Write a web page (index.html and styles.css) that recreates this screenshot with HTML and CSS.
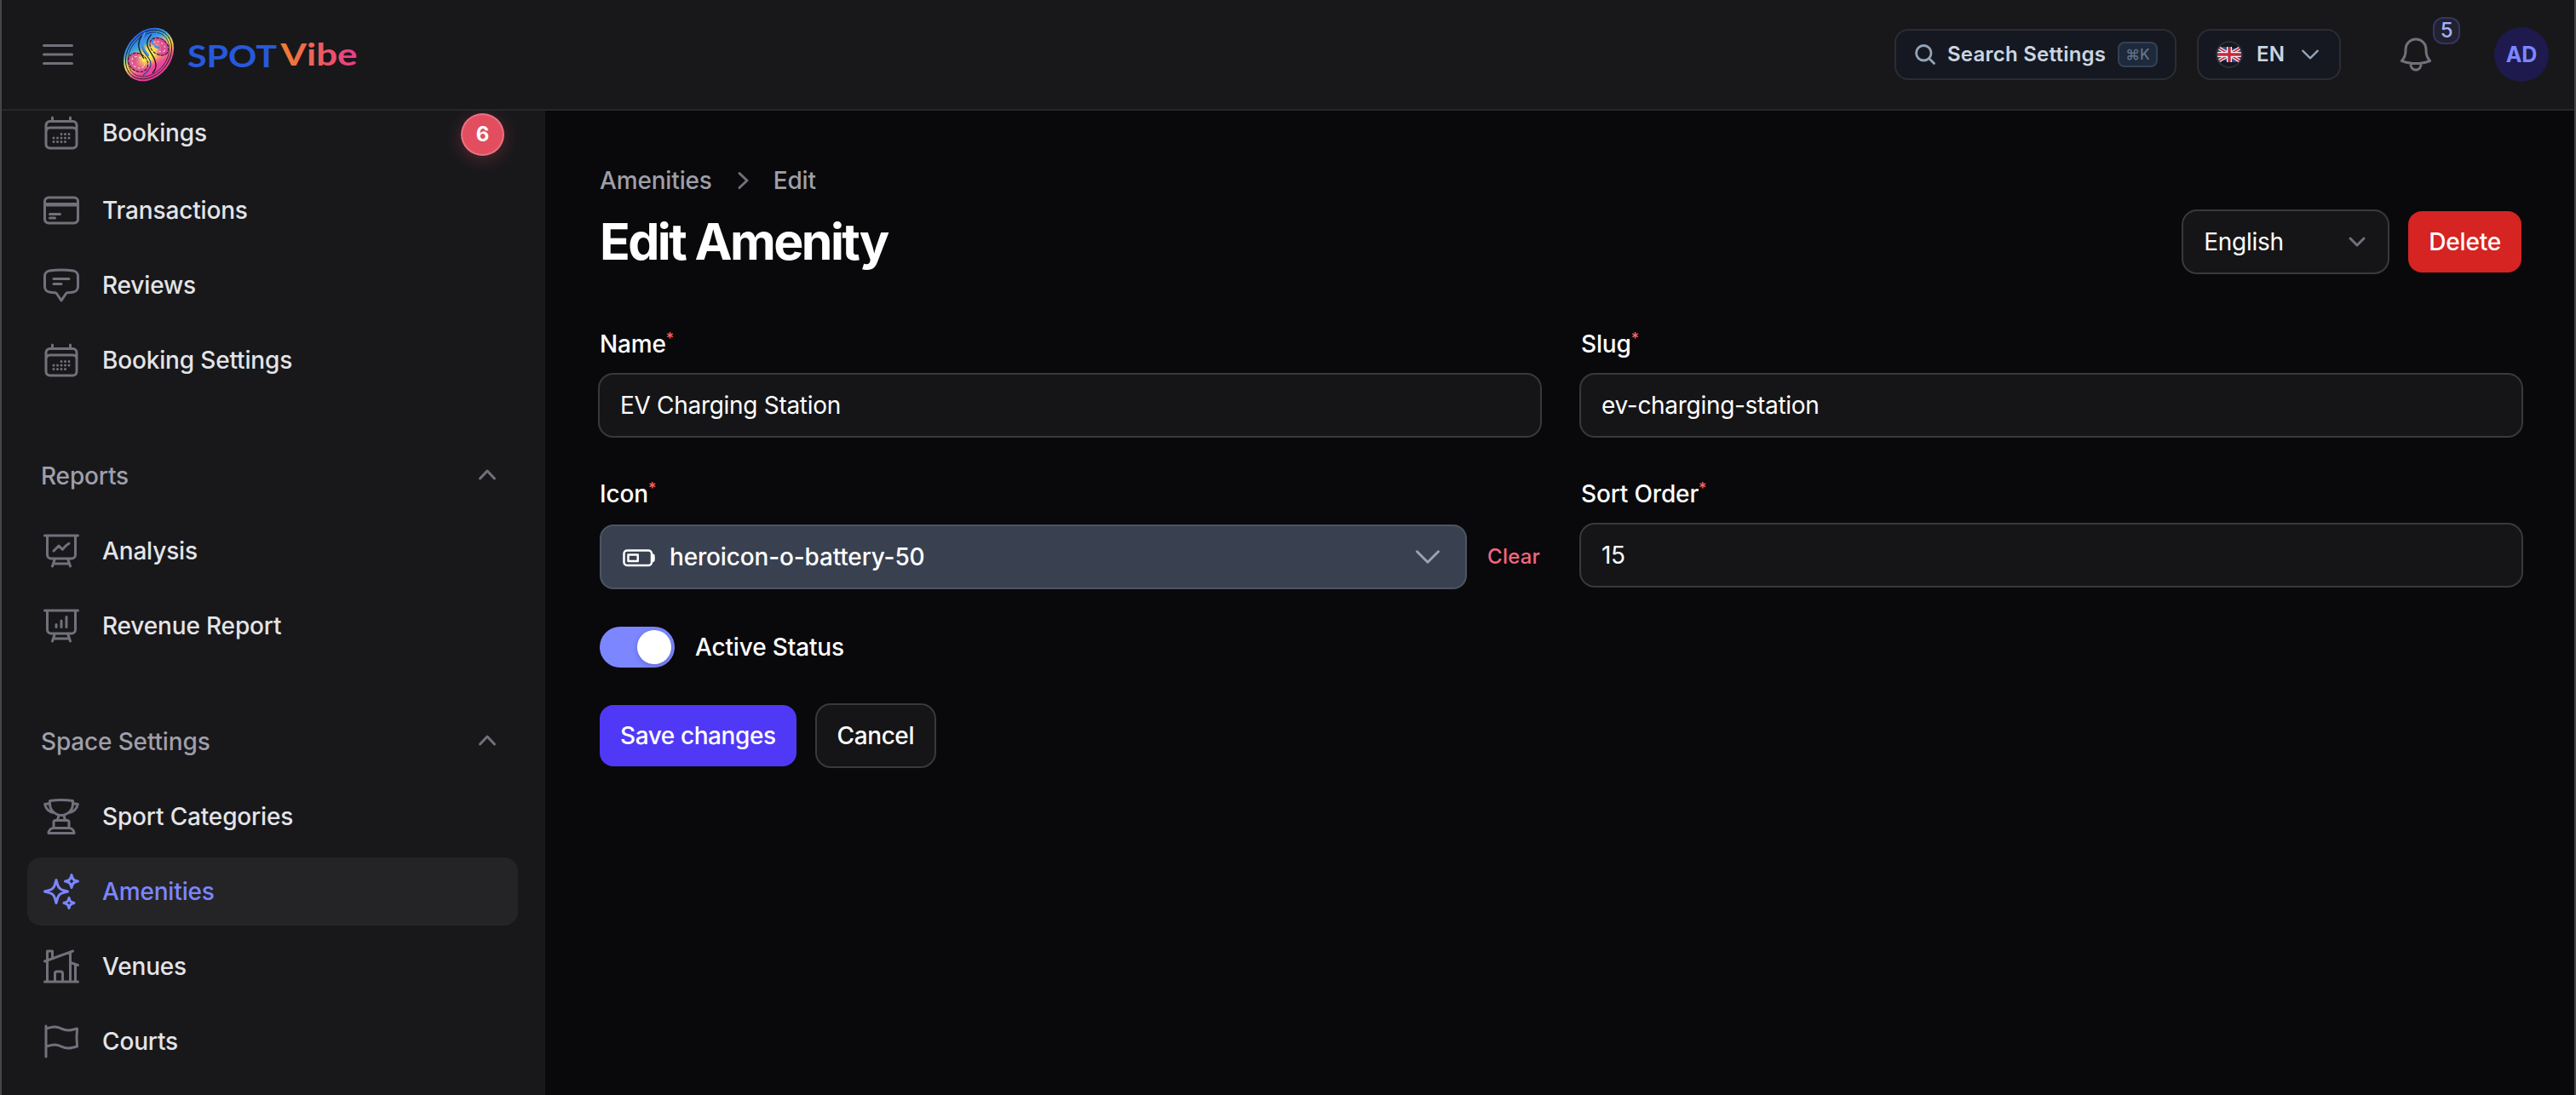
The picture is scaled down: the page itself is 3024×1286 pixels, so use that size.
FILE: index.html
```
<!DOCTYPE html>
<html lang="en" class="dark">
<head>
  <meta charset="UTF-8">
  <meta name="viewport" content="width=device-width, initial-scale=1.0">
  <title>Edit Amenity - SPOTVibe</title>
  <link rel="stylesheet" href="styles.css">
</head>
<body>
  <header class="topbar">
    <button class="menu-btn" aria-label="Toggle sidebar">
      <svg class="icon" viewBox="0 0 24 24"><path d="M3.75 6.75h16.5M3.75 12h16.5m-16.5 5.25h16.5"/></svg>
    </button>
    <a class="logo" href="#">
      <svg class="logo-img" viewBox="0 0 290 68">
        <defs>
          <linearGradient id="rim" gradientUnits="userSpaceOnUse" x1="-25" y1="-10" x2="25" y2="10">
            <stop offset="0" stop-color="#2563eb"/>
            <stop offset=".25" stop-color="#38a3e0"/>
            <stop offset=".5" stop-color="#fde047"/>
            <stop offset=".78" stop-color="#ec4899"/>
            <stop offset="1" stop-color="#ec3a9b"/>
          </linearGradient>
          <radialGradient id="core">
            <stop offset="0" stop-color="#fff04a"/>
            <stop offset=".45" stop-color="#f8e04f"/>
            <stop offset="1" stop-color="#f5a565" stop-opacity="0"/>
          </radialGradient>
          <linearGradient id="vibe" gradientUnits="userSpaceOnUse" x1="193" y1="0" x2="282" y2="0">
            <stop offset="0" stop-color="#f0802f"/>
            <stop offset="1" stop-color="#ec3a8b"/>
          </linearGradient>
        </defs>
        <g transform="translate(38.5 34) rotate(38)">
          <ellipse rx="26.5" ry="34" fill="url(#rim)"/>
          <ellipse rx="24" ry="31.5" fill="none" stroke="#18181b" stroke-width=".9"/>
          <ellipse rx="21.5" ry="28.5" fill="none" stroke="#18181b" stroke-width=".7"/>
          <ellipse cx="4" cy="-15" rx="13" ry="10" fill="#dd4b9c"/>
          <ellipse cx="-4" cy="15" rx="13" ry="11" fill="#dd5598"/>
          <ellipse rx="12" ry="21" fill="url(#core)"/>
          <path d="M-17-17C-18-3-8 1 1 3s12 8 9 20" fill="none" stroke="#2a3f9c" stroke-width="1.2"/>
          <path d="M-12-20C-13-7-4-5 4-2s14 8 13 16" fill="none" stroke="#18181b" stroke-width="1.3"/>
          <path d="M-20-12C-19 0-10 4-2 7" fill="none" stroke="#18181b" stroke-width="1.3"/>
          <path d="M-19-17C-16-2-8-1 0 1M-8-25C-10-14-2-10 5-14" fill="none" stroke="#3f8fe8" stroke-width="2.4"/>
          <ellipse cx="4" cy="-15" rx="12" ry="9" fill="none" stroke="#18181b" stroke-width="1" stroke-dasharray="3 2"/>
          <ellipse cx="-4" cy="15" rx="12.5" ry="10" fill="none" stroke="#18181b" stroke-width="1" stroke-dasharray="3 2"/>
          <ellipse cx="-4" cy="15" rx="8" ry="6" fill="none" stroke="#ffe9a8" stroke-width="1" stroke-dasharray="2 3"/>
          <ellipse cx="4" cy="-15" rx="8" ry="5" fill="none" stroke="#ffd0a8" stroke-width="1" stroke-dasharray="2 3"/>
        </g>
        <text x="84" y="49" class="logo-spot" textLength="105" lengthAdjust="spacingAndGlyphs">SPOT</text>
        <text x="193.500" y="47" class="logo-vibe" textLength="90" lengthAdjust="spacingAndGlyphs" fill="url(#vibe)">Vibe</text>
      </svg>
    </a>
    <div class="topbar-end">
      <button class="pill search-btn">
        <svg class="search-icon" viewBox="0 0 24 24"><path d="m21 21-5.197-5.197m0 0A7.5 7.5 0 1 0 5.196 5.196a7.5 7.5 0 0 0 10.607 10.607Z"/></svg>
        <span>Search Settings</span>
        <kbd>⌘K</kbd>
      </button>
      <button class="pill lang-btn">
        <span class="flag">
          <svg viewBox="0 0 28 20">
            <path d="M0 2q7-2 14 0t14 0v16q-7 2-14 0t-14 0z" fill="#3a4a8c"/>
            <path d="M1 2l26 16M27 2L1 18" stroke="#f3f3f5" stroke-width="4"/>
            <path d="M1 2l26 16M27 2L1 18" stroke="#c8283c" stroke-width="1.5"/>
            <path d="M14 1v18M0 10h28" stroke="#f3f3f5" stroke-width="6"/>
            <path d="M14 1v18M0 10h28" stroke="#c8283c" stroke-width="3.4"/>
          </svg>
        </span>
        <span>EN</span>
        <svg class="lang-chevron" viewBox="0 0 24 24"><path d="m19.5 8.25-7.5 7.5-7.5-7.5"/></svg>
      </button>
      <button class="bell-btn" aria-label="Notifications">
        <svg class="icon" viewBox="0 0 24 24"><path d="M14.857 17.082a23.848 23.848 0 0 0 5.454-1.31A8.967 8.967 0 0 1 18 9.75V9A6 6 0 0 0 6 9v.75a8.967 8.967 0 0 1-2.312 6.022c1.733.64 3.56 1.085 5.455 1.31m5.714 0a24.255 24.255 0 0 1-5.714 0m5.714 0a3 3 0 1 1-5.714 0"/></svg>
        <span class="bell-badge">5</span>
      </button>
      <div class="avatar">AD</div>
    </div>
  </header>

  <div class="layout">
    <aside class="sidebar">
      <ul class="nav-group">
        <li class="nav-item has-badge">
          <svg class="icon" viewBox="0 0 24 24"><path d="M6.75 3v2.25M17.25 3v2.25M3 18.75V7.5a2.25 2.25 0 0 1 2.25-2.25h13.5A2.25 2.25 0 0 1 21 7.5v11.25m-18 0A2.25 2.25 0 0 0 5.25 21h13.5A2.25 2.25 0 0 0 21 18.75m-18 0v-7.5A2.25 2.25 0 0 1 5.25 9h13.5A2.25 2.25 0 0 1 21 11.25v7.5m-9-6h.008v.008H12v-.008ZM12 15h.008v.008H12V15Zm0 2.25h.008v.008H12v-.008ZM9.75 15h.008v.008H9.75V15Zm0 2.25h.008v.008H9.75v-.008ZM7.5 15h.008v.008H7.5V15Zm0 2.25h.008v.008H7.5v-.008Zm6.75-4.5h.008v.008h-.008v-.008Zm0 2.25h.008v.008h-.008V15Zm0 2.25h.008v.008h-.008v-.008Zm2.25-4.5h.008v.008H16.5v-.008Zm0 2.25h.008v.008H16.5V15Z"/></svg>
          <span>Bookings</span>
          <span class="nav-badge">6</span>
        </li>
        <li class="nav-item">
          <svg class="icon" viewBox="0 0 24 24"><path d="M2.25 8.25h19.5M2.25 9h19.5m-16.5 5.25h6m-6 2.25h3m-3.75 3h15a2.25 2.25 0 0 0 2.25-2.25V6.75A2.25 2.25 0 0 0 19.5 4.5h-15a2.25 2.25 0 0 0-2.25 2.25v10.5A2.25 2.25 0 0 0 4.5 19.5Z"/></svg>
          <span>Transactions</span>
        </li>
        <li class="nav-item">
          <svg class="icon" viewBox="0 0 24 24"><path d="M7.5 8.25h9m-9 3H12m-9.75 1.51c0 1.6 1.123 2.994 2.707 3.227 1.129.166 2.27.293 3.423.379.35.026.67.21.865.501L12 21l2.755-4.133a1.14 1.14 0 0 1 .865-.501 48.172 48.172 0 0 0 3.423-.379c1.584-.233 2.707-1.626 2.707-3.228V6.741c0-1.602-1.123-2.995-2.707-3.228A48.394 48.394 0 0 0 12 3c-2.392 0-4.744.175-7.043.513C3.373 3.746 2.25 5.14 2.25 6.741v6.018Z"/></svg>
          <span>Reviews</span>
        </li>
        <li class="nav-item">
          <svg class="icon" viewBox="0 0 24 24"><path d="M6.75 3v2.25M17.25 3v2.25M3 18.75V7.5a2.25 2.25 0 0 1 2.25-2.25h13.5A2.25 2.25 0 0 1 21 7.5v11.25m-18 0A2.25 2.25 0 0 0 5.25 21h13.5A2.25 2.25 0 0 0 21 18.75m-18 0v-7.5A2.25 2.25 0 0 1 5.25 9h13.5A2.25 2.25 0 0 1 21 11.25v7.5m-9-6h.008v.008H12v-.008ZM12 15h.008v.008H12V15Zm0 2.25h.008v.008H12v-.008ZM9.75 15h.008v.008H9.75V15Zm0 2.25h.008v.008H9.75v-.008ZM7.5 15h.008v.008H7.5V15Zm0 2.25h.008v.008H7.5v-.008Zm6.75-4.5h.008v.008h-.008v-.008Zm0 2.25h.008v.008h-.008V15Zm0 2.25h.008v.008h-.008v-.008Zm2.25-4.5h.008v.008H16.5v-.008Zm0 2.25h.008v.008H16.5V15Z"/></svg>
          <span>Booking Settings</span>
        </li>
      </ul>

      <div class="nav-section">
        <div class="nav-heading">
          <span>Reports</span>
          <svg class="chevron" viewBox="0 0 20 20"><path d="m5.75 11.5 4.25-4.5 4.25 4.5"/></svg>
        </div>
        <ul class="nav-group">
          <li class="nav-item">
            <svg class="icon" viewBox="0 0 24 24"><path d="M3.75 3v11.25A2.25 2.25 0 0 0 6 16.5h2.25M3.75 3h-1.5m1.5 0h16.5m0 0h1.5m-1.5 0v11.25A2.25 2.25 0 0 1 18 16.5h-2.25m-7.5 0h7.5m-7.5 0-1 3m8.5-3 1 3m0 0 .5 1.5m-.5-1.5h-9.5m0 0-.5 1.5m.75-9 3-3 2.148 2.148A12.061 12.061 0 0 1 16.5 7.605"/></svg>
            <span>Analysis</span>
          </li>
          <li class="nav-item">
            <svg class="icon" viewBox="0 0 24 24"><path d="M3.75 3v11.25A2.25 2.25 0 0 0 6 16.5h2.25M3.75 3h-1.5m1.5 0h16.5m0 0h1.5m-1.5 0v11.25A2.25 2.25 0 0 1 18 16.5h-2.25m-7.5 0h7.5m-7.5 0-1 3m8.5-3 1 3m0 0 .5 1.5m-.5-1.5h-9.5m0 0-.5 1.5M9 11.25v1.5M12 9v3.75m3-6v6"/></svg>
            <span>Revenue Report</span>
          </li>
        </ul>
      </div>

      <div class="nav-section">
        <div class="nav-heading">
          <span>Space Settings</span>
          <svg class="chevron" viewBox="0 0 20 20"><path d="m5.75 11.5 4.25-4.5 4.25 4.5"/></svg>
        </div>
        <ul class="nav-group">
          <li class="nav-item">
            <svg class="icon" viewBox="0 0 24 24"><path d="M16.5 18.75h-9m9 0a3 3 0 0 1 3 3h-15a3 3 0 0 1 3-3m9 0v-3.375c0-.621-.503-1.125-1.125-1.125h-.871M7.5 18.75v-3.375c0-.621.504-1.125 1.125-1.125h.872m5.007 0H9.497m5.007 0a7.454 7.454 0 0 1-.982-3.172M9.497 14.25a7.454 7.454 0 0 0 .981-3.172M5.25 4.236c-.982.143-1.954.317-2.916.52A6.003 6.003 0 0 0 7.73 9.728M5.25 4.236V4.5c0 2.108.966 3.99 2.48 5.228M5.25 4.236V2.721C7.456 2.41 9.71 2.25 12 2.25c2.291 0 4.545.16 6.75.47v1.516M7.73 9.728a6.726 6.726 0 0 0 2.748 1.35m8.272-6.842V4.5c0 2.108-.966 3.99-2.48 5.228m2.48-5.492a46.32 46.32 0 0 1 2.916.52 6.003 6.003 0 0 1-5.395 4.972m0 0a6.726 6.726 0 0 1-2.749 1.35m0 0a6.772 6.772 0 0 1-3.044 0"/></svg>
            <span>Sport Categories</span>
          </li>
          <li class="nav-item active">
            <svg class="icon" viewBox="0 0 24 24"><path d="M9.813 15.904 9 18.75l-.813-2.846a4.5 4.5 0 0 0-3.09-3.09L2.25 12l2.846-.813a4.5 4.5 0 0 0 3.09-3.09L9 5.25l.813 2.846a4.5 4.5 0 0 0 3.09 3.09L15.75 12l-2.846.813a4.5 4.5 0 0 0-3.09 3.09ZM18.259 8.715 18 9.75l-.259-1.035a3.375 3.375 0 0 0-2.455-2.456L14.25 6l1.036-.259a3.375 3.375 0 0 0 2.455-2.456L18 2.25l.259 1.035a3.375 3.375 0 0 0 2.456 2.456L21.75 6l-1.035.259a3.375 3.375 0 0 0-2.456 2.456ZM16.894 20.567 16.5 21.75l-.394-1.183a2.25 2.25 0 0 0-1.423-1.423L13.5 18.75l1.183-.394a2.25 2.25 0 0 0 1.423-1.423l.394-1.183.394 1.183a2.25 2.25 0 0 0 1.423 1.423l1.183.394-1.183.394a2.25 2.25 0 0 0-1.423 1.423Z"/></svg>
            <span>Amenities</span>
          </li>
          <li class="nav-item">
            <svg class="icon" viewBox="0 0 24 24"><path d="M8.25 21v-4.875c0-.621.504-1.125 1.125-1.125h2.25c.621 0 1.125.504 1.125 1.125V21m0 0h4.5V3.545M12.75 21h7.5V10.75M2.25 21h1.5m18 0h-18M2.25 9l4.5-1.636M18.75 3l-1.5.545m0 6.205 3 1m1.5.5-1.5-.5M6.75 7.364V3h-3v18m3-13.636 10.5-3.819"/></svg>
            <span>Venues</span>
          </li>
          <li class="nav-item">
            <svg class="icon" viewBox="0 0 24 24"><path d="M3 3v1.5M3 21v-6m0 0 2.77-.693a9 9 0 0 1 6.208.682l.108.054a9 9 0 0 0 6.086.71l3.114-.732a48.524 48.524 0 0 1-.005-10.499l-3.11.732a9 9 0 0 1-6.085-.711l-.108-.054a9 9 0 0 0-6.208-.682L3 4.5M3 15V4.5"/></svg>
            <span>Courts</span>
          </li>
        </ul>
      </div>
    </aside>

    <main class="main">
      <nav class="breadcrumbs">
        <a href="#">Amenities</a>
        <svg class="chevron" viewBox="0 0 20 20"><path d="m8 5.75 4.5 4.25-4.5 4.25"/></svg>
        <span>Edit</span>
      </nav>
      <div class="page-header">
        <h1>Edit Amenity</h1>
        <div class="page-actions">
          <div class="control locale-select">
            <span>English</span>
            <svg class="chevron" viewBox="0 0 20 20"><path d="m6 8 4 4 4-4"/></svg>
          </div>
          <button class="btn btn-danger">Delete</button>
        </div>
      </div>

      <form class="form">
        <div class="form-grid">
          <div class="field">
            <label>Name<sup>*</sup></label>
            <input class="control" type="text" value="EV Charging Station">
          </div>
          <div class="field">
            <label>Slug<sup>*</sup></label>
            <input class="control" type="text" value="ev-charging-station">
          </div>
          <div class="field">
            <label>Icon<sup>*</sup></label>
            <div class="icon-picker">
              <div class="icon-select">
                <svg class="battery" viewBox="0 0 24 24"><path d="M21 10.5h.375c.621 0 1.125.504 1.125 1.125v2.25c0 .621-.504 1.125-1.125 1.125H21M4.5 10.5h6.75V15H4.5v-4.5ZM3.75 18h15A2.25 2.25 0 0 0 21 15.75v-6a2.25 2.25 0 0 0-2.25-2.25h-15A2.25 2.25 0 0 0 1.5 9.75v6A2.25 2.25 0 0 0 3.75 18Z"/></svg>
                <span>heroicon-o-battery-50</span>
                <svg class="picker-chevron" viewBox="0 0 24 24"><path d="m19.5 8.25-7.5 7.5-7.5-7.5"/></svg>
              </div>
              <button type="button" class="clear-btn">Clear</button>
            </div>
          </div>
          <div class="field">
            <label>Sort Order<sup>*</sup></label>
            <input class="control" type="text" value="15">
          </div>
        </div>
        <div class="toggle-row">
          <span class="toggle"><span class="knob"></span></span>
          <span>Active Status</span>
        </div>
        <div class="form-actions">
          <button type="button" class="btn btn-primary">Save changes</button>
          <button type="button" class="btn btn-gray">Cancel</button>
        </div>
      </form>
    </main>
  </div>
</body>
</html>
```
FILE: styles.css
```
* { margin: 0; padding: 0; box-sizing: border-box; }
html, body { height: 100%; }
body {
  font-family: Inter, 'Liberation Sans', sans-serif;
  font-size: 28px;
  line-height: 40px;
  letter-spacing: -0.16px;
  background: #09090b;
  color: #fff;
  overflow: hidden;
  display: flex;
  flex-direction: column;
  position: relative;
}
/* window edges */
body::after {
  content: "";
  position: absolute;
  inset: 0;
  border: solid #464648;
  border-width: 0 2px;
  z-index: 5;
  pointer-events: none;
}
button, input { font: inherit; letter-spacing: inherit; color: inherit; background: none; border: none; outline: none; }
ul { list-style: none; }
a { color: inherit; text-decoration: none; }
svg { display: block; flex-shrink: 0; fill: none; stroke: currentColor; stroke-width: 1.5; stroke-linecap: round; stroke-linejoin: round; }
.icon { width: 48px; height: 48px; color: #71717b; }
.chevron { width: 40px; height: 40px; color: #71717b; }

/* Topbar */
.topbar {
  height: 128px;
  flex-shrink: 0;
  display: flex;
  align-items: center;
  background: #18181b;
  box-shadow: 0 2px 0 #27272a;
  padding: 0 32px 0 44px;
  position: relative;
  z-index: 2;
}
.logo { margin-left: 44px; }
.logo-img { width: 290px; height: 68px; stroke: none; }
.logo text { font-family: Lato, sans-serif; font-weight: 700; letter-spacing: 0; }
.logo-spot { fill: #2759dc; font-size: 36px; }
.logo-vibe { font-size: 36px; }
.topbar-end { margin-left: auto; display: flex; align-items: center; }
.pill {
  height: 60px;
  display: flex;
  align-items: center;
  background: #151820;
  border: 2px solid #2b2d33;
  border-radius: 16px;
  font-size: 24px;
  font-weight: 600;
  color: #cbd5e1;
}
.search-btn { width: 331px; padding: 0 20px; gap: 12px; margin-right: 24px; letter-spacing: 0.24px; }
.search-icon { width: 28px; height: 28px; stroke-width: 2.4; color: #94a3b8; }
kbd {
  height: 30px;
  width: 47px;
  line-height: 26px;
  margin-left: auto;
  text-align: center;
  font-family: Inter, 'DejaVu Sans', sans-serif;
  font-size: 17px;
  font-weight: 500;
  letter-spacing: 0;
  color: #64748b;
  background: #1e293b;
  border: 2px solid #334155;
  border-radius: 8px;
}
.lang-btn { width: 169px; padding: 0 20px; letter-spacing: 0.2px; }
.flag {
  width: 32px;
  height: 32px;
  border: 2px solid #2d2f35;
  border-radius: 50%;
  display: flex;
  align-items: center;
  justify-content: center;
  margin-right: 16px;
  overflow: hidden;
}
.flag svg { width: 28px; height: 20px; stroke-linecap: butt; stroke: none; }
.lang-chevron { width: 28px; height: 28px; stroke-width: 2; color: #94a3b8; margin-left: auto; }
.bell-btn { margin-left: 64px; position: relative; }
.bell-badge {
  position: absolute;
  top: -20px;
  left: 44px;
  width: 32px;
  height: 32px;
  line-height: 28px;
  font-size: 24px;
  font-weight: 500;
  color: #a3b3ff;
  background: #21212f;
  border: 2px solid #353560;
  border-radius: 12px;
}
.avatar {
  width: 64px;
  height: 64px;
  line-height: 64px;
  margin-left: 68px;
  text-align: center;
  border-radius: 50%;
  background: #1e1a4d;
  color: #7c86ff;
  font-size: 25px;
  font-weight: 700;
}

/* Sidebar */
.layout { flex: 1; display: flex; min-height: 0; }
.sidebar {
  width: 640px;
  flex-shrink: 0;
  background: #18181b;
  padding: 0 32px;
  display: flex;
  flex-direction: column;
  gap: 56px;
}
.sidebar > .nav-group { margin-top: -12px; }
.nav-group { display: flex; flex-direction: column; gap: 8px; }
.nav-section { display: flex; flex-direction: column; gap: 8px; }
.nav-item {
  height: 80px;
  display: flex;
  align-items: center;
  gap: 24px;
  padding: 0 16px;
  border-radius: 16px;
  font-weight: 500;
  color: #e4e4e7;
}
.nav-item.has-badge { margin-bottom: 3px; }
.nav-item.active { background: #242427; color: #7c86ff; }
.nav-item.active .icon { color: #7c86ff; }
.nav-badge {
  margin: 4px 0 0 auto;
  width: 51px;
  height: 50px;
  line-height: 46px;
  text-align: center;
  font-size: 24px;
  font-weight: 700;
  color: #fff;
  background: #e24e60;
  border: 2px solid #ea7283;
  border-radius: 50%;
  box-shadow: 0 4px 20px rgba(226, 78, 96, 0.3);
}
.nav-heading {
  height: 80px;
  display: flex;
  align-items: center;
  justify-content: space-between;
  padding: 0 16px;
  font-weight: 500;
  color: #9f9fa9;
}

/* Page */
.main { flex: 1; padding: 64px; }
.breadcrumbs {
  display: flex;
  align-items: center;
  gap: 16px;
  margin-bottom: 16px;
  font-weight: 500;
  color: #9f9fa9;
}
.page-header { display: flex; justify-content: space-between; align-items: center; height: 72px; margin-bottom: 64px; }
h1 { font-size: 59px; line-height: 72px; font-weight: 700; letter-spacing: -2.6px; }
.page-actions { display: flex; gap: 24px; }
.control {
  width: 100%;
  height: 72px;
  padding: 0 24px;
  background: #151517;
  box-shadow: 0 0 0 2px #39393b;
  border-radius: 16px;
  letter-spacing: -0.3px;
}
.locale-select { width: 240px; display: flex; align-items: center; justify-content: space-between; padding-right: 16px; }
.btn { height: 72px; padding: 0 24px; border-radius: 16px; font-weight: 500; letter-spacing: -0.42px; }
.btn-danger { background: #d52422; letter-spacing: -0.2px; }
.btn-primary { background: #4f39f6; }
.btn-gray { background: #151517; box-shadow: 0 0 0 2px #39393b; }

.form-grid { display: grid; grid-template-columns: 1fr 1fr; gap: 48px; }
.field label { display: block; height: 40px; margin-bottom: 16px; font-weight: 500; }
sup { font-size: 18px; line-height: 0; vertical-align: super; color: #ff6467; }
.icon-picker { display: flex; align-items: center; gap: 24px; }
.icon-select {
  flex: 1;
  height: 76px;
  display: flex;
  align-items: center;
  gap: 16px;
  padding: 0 24px;
  background: #394150;
  border: 2px solid #4b5563;
  border-radius: 16px;
  font-weight: 500;
}
.battery { width: 40px; height: 40px; }
.picker-chevron { width: 40px; height: 40px; margin-left: auto; stroke-width: 1.8; color: #9ca3af; }
.clear-btn { font-size: 24px; font-weight: 500; letter-spacing: 0.2px; color: #f5667d; }
.toggle-row { display: flex; align-items: center; gap: 24px; margin: 44px 0; font-weight: 500; }
.toggle { width: 88px; height: 48px; padding: 4px; border-radius: 24px; background: #7c86ff; display: flex; justify-content: flex-end; }
.knob { width: 40px; height: 40px; border-radius: 50%; background: #fff; box-shadow: 0 2px 6px rgba(0, 0, 0, 0.2); }
.form-actions { display: flex; gap: 24px; }
```
